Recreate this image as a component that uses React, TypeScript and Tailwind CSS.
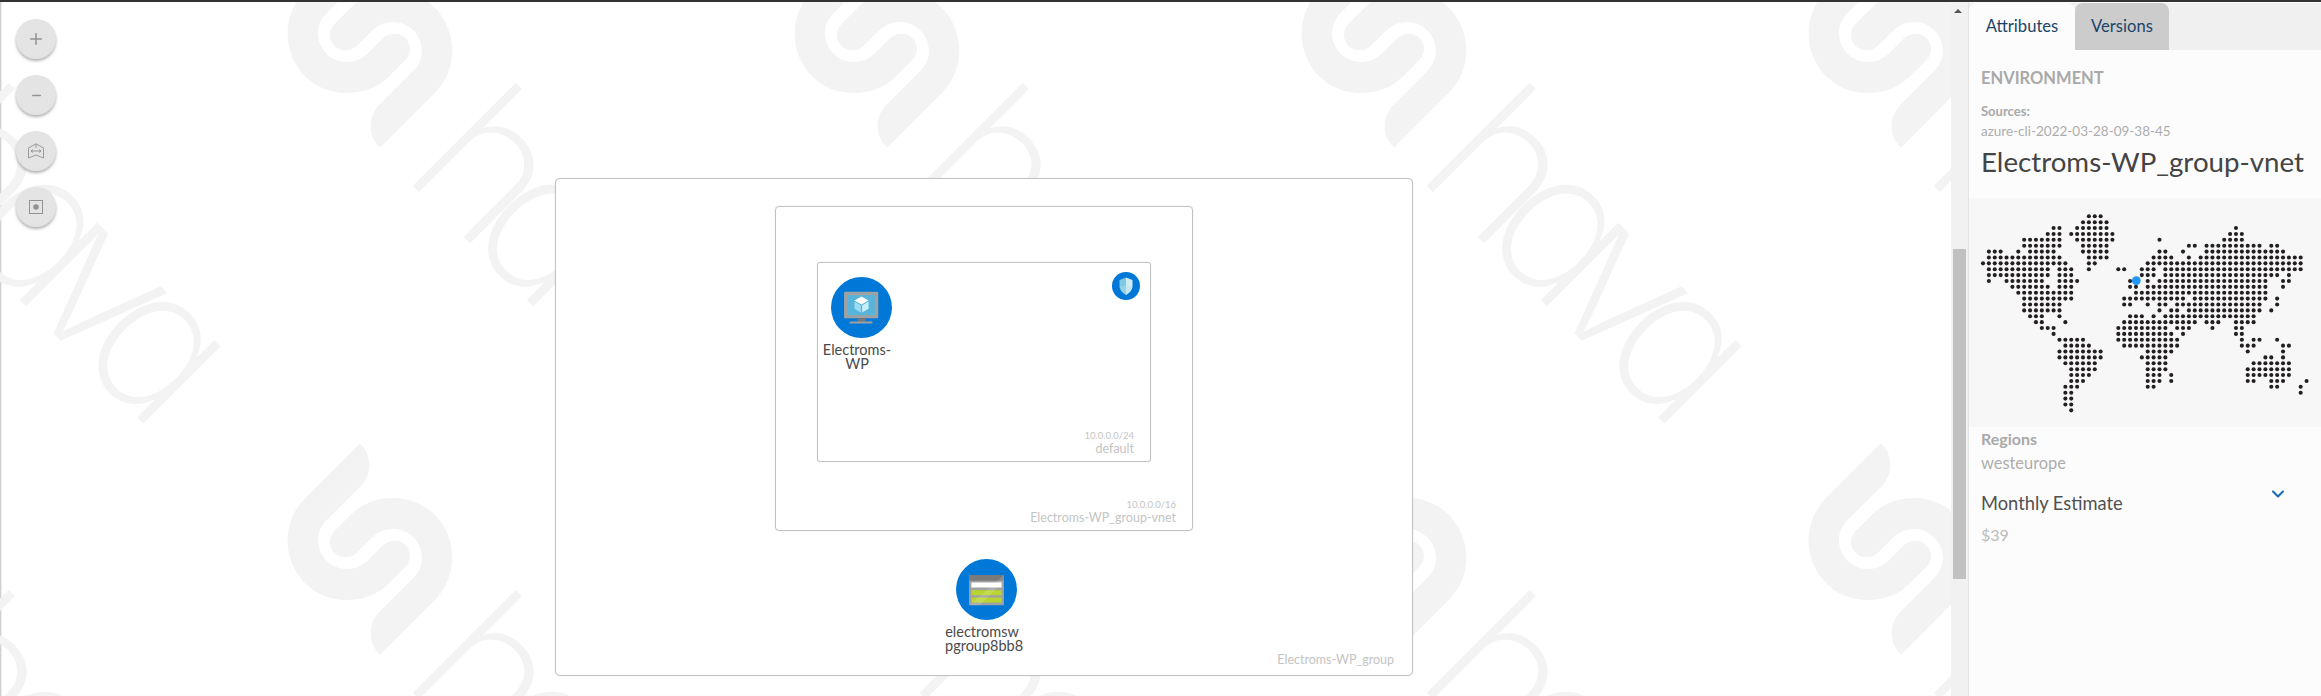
import { ChevronDown, Minus, Plus } from 'lucide-react'

// [row, fromCol, toCol] runs of the dotted world map
const mapRuns: number[][] = [
  [0, 18, 20], [1, 17, 21], [2, 12, 13], [2, 16, 21], [2, 43, 43],
  [3, 11, 13], [3, 15, 22], [3, 42, 44],
  [4, 7, 13], [4, 16, 22], [4, 30, 30], [4, 41, 44],
  [5, 7, 13], [5, 17, 21], [5, 35, 36], [5, 38, 47], [5, 49, 50],
  [6, 1, 3], [6, 6, 6], [6, 8, 12], [6, 17, 21], [6, 30, 31], [6, 34, 34], [6, 38, 51],
  [7, 1, 13], [7, 18, 21], [7, 29, 32], [7, 35, 35], [7, 37, 54],
  [8, 0, 14], [8, 18, 19], [8, 28, 54],
  [9, 1, 11], [9, 13, 15], [9, 18, 18], [9, 23, 24], [9, 27, 29], [9, 31, 54],
  [10, 1, 11], [10, 13, 15], [10, 27, 29], [10, 31, 50], [10, 52, 52],
  [11, 1, 1], [11, 4, 10], [11, 13, 16], [11, 25, 25], [11, 28, 28], [11, 30, 48], [11, 51, 52],
  [12, 5, 11], [12, 13, 15], [12, 25, 26], [12, 28, 48], [12, 51, 51],
  [13, 6, 15], [13, 26, 48],
  [14, 7, 15], [14, 24, 34], [14, 36, 48], [14, 50, 50],
  [15, 7, 13], [15, 24, 25], [15, 28, 28], [15, 30, 31], [15, 33, 47], [15, 50, 50],
  [16, 7, 13], [16, 30, 30], [16, 32, 33], [16, 35, 47], [16, 49, 49],
  [17, 8, 10], [17, 13, 13], [17, 25, 27], [17, 29, 29], [17, 31, 46],
  [18, 9, 10], [18, 14, 14], [18, 24, 36], [18, 38, 40], [18, 43, 46],
  [19, 10, 12], [19, 23, 31], [19, 33, 35], [19, 39, 39], [19, 43, 44],
  [20, 12, 12], [20, 23, 32], [20, 34, 34], [20, 43, 44],
  [21, 13, 17], [21, 23, 33], [21, 44, 44], [21, 46, 47], [21, 50, 50],
  [22, 14, 18], [22, 24, 33], [22, 44, 46], [22, 51, 52],
  [23, 13, 20], [23, 28, 32], [23, 45, 45], [23, 51, 51],
  [24, 13, 20], [24, 27, 31], [24, 48, 49], [24, 51, 51],
  [25, 14, 19], [25, 28, 31], [25, 46, 52],
  [26, 15, 19], [26, 28, 31], [26, 45, 52],
  [27, 15, 18], [27, 28, 30], [27, 32, 32], [27, 45, 52],
  [28, 15, 17], [28, 28, 30], [28, 32, 32], [28, 45, 46], [28, 49, 51], [28, 55, 55],
  [29, 14, 16], [29, 28, 29], [29, 49, 50], [29, 54, 54],
  [30, 14, 15], [30, 54, 54], [31, 14, 15], [32, 14, 15], [33, 15, 15],
]

const mapDots = mapRuns.flatMap(([row, from, to]) =>
  Array.from({ length: to - from + 1 }, (_, i) => ({ x: 1983 + (from + i) * 5.883, y: 217.3 + row * 5.88 }))
)

const logoPiece =
  'M1080 130C1100 150 1108 172 1108 195C1108 220 1098 240 1085 255L980 360C965 375 954 397 954 420C954 468 993 507 1040 507C1065 507 1088 497 1105 480L1150 435C1158 427 1170 422 1185 422C1210 422 1230 443 1230 468C1230 480 1225 492 1217 500L1165 552C1130 585 1090 600 1040 600C940 600 863 520 863 422C863 375 880 332 912 298Z'

function Watermark() {
  const tiles = [-507, 0].flatMap((dy) => [-507, 0, 507, 1014, 1521].map((dx) => ({ dx, dy })))
  return (
    <svg aria-hidden="true" className="absolute top-0 left-0" width={1951} height={694} viewBox="0 2 1951 694">
      {tiles.map(({ dx, dy }) => (
        <g key={`${dx}-${dy}`} transform={`translate(${dx} ${dy})`} fill="#f4f3f4">
          <g transform="translate(0 400) scale(0.3333)">
            <path d={logoPiece} />
            <path d={logoPiece} transform="rotate(180 1110 447)" />
          </g>
          <text
            transform="translate(400 680) rotate(45)"
            fontSize={200}
            textLength={372}
            className="font-['Inter',sans-serif] font-extralight [font-feature-settings:'cv11']"
          >
            hava
          </text>
        </g>
      ))}
    </svg>
  )
}

function ZoomButton({ children }: { children: React.ReactNode }) {
  return (
    <button className="flex h-10 w-10 items-center justify-center rounded-full bg-[#e4e4e4] text-[#929292] shadow-[0_2px_3px_rgba(0,0,0,0.3)]">
      {children}
    </button>
  )
}

function VmIcon() {
  return (
    <svg viewBox="94 49 182 182" className="h-[61px] w-[61px]">
      <circle cx="185" cy="140" r="91" fill="#0078d7" />
      <rect x="133" y="93" width="102" height="79" rx="3" fill="#a0a1a2" />
      <rect x="143" y="103" width="82" height="60" fill="#59b4d9" />
      <rect x="172" y="172" width="26" height="10" fill="#767676" />
      <rect x="150" y="182" width="68" height="6" rx="2" fill="#a0a1a2" />
      <path d="M185 107L206 119L185 131L164 119Z" fill="#ffffff" />
      <path d="M164 122L183 133V155L164 144Z" fill="#9cdcf5" />
      <path d="M206 122L187 133V155L206 144Z" fill="#c8eefa" />
    </svg>
  )
}

function StorageIcon() {
  return (
    <svg viewBox="79 27 182 182" className="h-[61px] w-[61px]">
      <circle cx="170" cy="118" r="91" fill="#0078d7" />
      <rect x="118" y="75" width="104" height="90" rx="3" fill="#a0a1a2" />
      <path d="M121 75H219Q222 75 222 78V92H118V78Q118 75 121 75Z" fill="#7a7a7a" />
      <rect x="125" y="97" width="90" height="15" fill="#ffffff" />
      <rect x="125" y="120" width="90" height="15" fill="#b8d432" />
      <rect x="125" y="142" width="90" height="15" fill="#b8d432" />
      <path d="M222 75V92L150 165H118Z" fill="#ffffff" opacity="0.14" />
    </svg>
  )
}

function ShieldIcon() {
  return (
    <svg viewBox="0 0 28 28" className="h-7 w-7">
      <circle cx="14" cy="14" r="14" fill="#0078d7" />
      <path d="M14 5.5L7.5 8V14C7.5 18 10.5 21 14 23Z" fill="#7fc8e0" />
      <path d="M14 5.5L20.5 8V14C20.5 18 17.5 21 14 23Z" fill="#c6e7f2" />
      <path d="M14 14H7.7C8.2 18 10.8 21 14 23ZM14 14H20.3V8.2L14 5.5Z" fill="#ffffff" opacity="0.18" />
    </svg>
  )
}

function Node({ className, icon, lines }: { className: string; icon: React.ReactNode; lines: string[] }) {
  return (
    <div className={`absolute flex flex-col ${className}`}>
      {icon}
      <div className="mt-[5px] -ml-[11px] w-[74px] text-center text-[14.5px] leading-[14px] text-[#4a4a4a]">
        {lines.map((line) => (
          <div key={line}>{line}</div>
        ))}
      </div>
    </div>
  )
}

function Diagram() {
  return (
    <div className="absolute top-[176px] left-[555px] flex h-[498px] w-[858px] flex-col items-end justify-end rounded-[5px] border border-[#c2c2c2] bg-white pr-[18px] pb-[7px] shadow-[0_0_1px_rgba(0,0,0,0.2)]">
      <div className="text-[12.5px] leading-4 text-[#c4c4c4]">Electroms-WP_group</div>

      <div className="absolute top-[27px] left-[219px] flex h-[325px] w-[418px] flex-col items-end justify-end rounded-[4px] border border-[#c2c2c2] pr-4 pb-[5px] shadow-[0_0_1px_rgba(0,0,0,0.2)]">
        <div className="text-[9.5px] leading-3 text-[#c4c4c4]">10.0.0.0/16</div>
        <div className="text-[12.5px] leading-[14px] text-[#c4c4c4]">Electroms-WP_group-vnet</div>

        <div className="absolute top-[55px] left-[41px] flex h-[200px] w-[334px] flex-col items-end justify-end rounded-[3px] border border-[#c2c2c2] pr-4 pb-[5px] shadow-[0_0_1px_rgba(0,0,0,0.2)]">
          <div className="text-[9.5px] leading-3 text-[#c4c4c4]">10.0.0.0/24</div>
          <div className="text-[12.5px] leading-[14px] text-[#c4c4c4]">default</div>
          <Node className="top-[14px] left-[13px]" icon={<VmIcon />} lines={['Electroms-', 'WP']} />
          <div className="absolute top-[9px] right-[10px]">
            <ShieldIcon />
          </div>
        </div>
      </div>

      <Node className="top-[380px] left-[400px]" icon={<StorageIcon />} lines={['electromsw', 'pgroup8bb8']} />
    </div>
  )
}

function Canvas() {
  return (
    <div className="relative flex-1 overflow-hidden bg-white shadow-[inset_2px_0_2px_-1px_rgba(0,0,0,0.25)]">
      <Watermark />
      <div className="absolute top-[17px] left-4 flex flex-col gap-4">
        <ZoomButton>
          <Plus size={18} strokeWidth={2} />
        </ZoomButton>
        <ZoomButton>
          <Minus size={13} strokeWidth={2.5} />
        </ZoomButton>
        <ZoomButton>
          <svg viewBox="0 0 16 16" className="h-4 w-4" fill="none" stroke="currentColor" strokeWidth="0.9">
            <path d="M0.5 5L8 0.8L15.5 5V15L8 12L0.5 15Z" />
            <path d="M3 8H13M3 8L5 6.5M3 8L5 9.5M13 8L11 6.5M13 8L11 9.5M8 1V5" />
          </svg>
        </ZoomButton>
        <ZoomButton>
          <svg viewBox="0 0 14 14" className="h-3.5 w-3.5" fill="none" stroke="currentColor" strokeWidth="1">
            <rect x="0.5" y="0.5" width="13" height="13" />
            <circle cx="7" cy="7" r="2.8" fill="currentColor" stroke="none" />
          </svg>
        </ZoomButton>
      </div>
      <Diagram />
    </div>
  )
}

function Scrollbar() {
  return (
    <div className="relative w-[17px] bg-[#f1f1f1]">
      <div className="absolute top-[7px] left-[3px] h-0 w-0 border-x-[4px] border-b-[4px] border-x-transparent border-b-[#555]" />
      <div className="absolute top-[247px] left-[2px] h-[330px] w-[13px] bg-[#c1c1c1]" />
    </div>
  )
}

function Sidebar() {
  return (
    <div className="w-[353px] border-l border-[#e4e4e4] bg-[#fcfcfc] pt-px">
      <div className="flex h-[47px] bg-[#f0f0f0]">
        <div className="flex w-[106px] items-center justify-center rounded-t-[8px] bg-[#fcfcfc] text-[16.6px] text-[#1d4468]">
          Attributes
        </div>
        <div className="flex w-[94px] items-center justify-center rounded-t-[8px] bg-[#cccccc] text-[16.6px] text-[#1d4468]">
          Versions
        </div>
      </div>

      <div className="px-3">
        <div className="mt-[18px] text-[16.5px] leading-[20px] font-bold text-[#a9a9a9]">ENVIRONMENT</div>
        <div className="mt-[15px] text-[13px] leading-[16px] font-bold text-[#a9a9a9]">Sources:</div>
        <div className="mt-[4px] text-[13.5px] leading-[16px] text-[#adadad]">azure-cli-2022-03-28-09-38-45</div>
        <div className="mt-[5px] text-[27.7px] leading-[36px] whitespace-nowrap text-[#444444]">Electroms-WP_group-vnet</div>
      </div>

      <div className="mt-[18px] h-[229px] bg-[#f7f7f7]">
        <svg viewBox="1969 199 352 229" className="h-[229px] w-[352px]">
          {mapDots.map((dot) => (
            <circle key={`${dot.x}-${dot.y}`} cx={dot.x} cy={dot.y} r="2.05" fill="#231f20" />
          ))}
          <circle cx="2136.3" cy="281.7" r="4.4" fill="#2196f3" />
        </svg>
      </div>

      <div className="px-3">
        <div className="mt-[2px] text-[16px] leading-[20px] font-bold text-[#a9a9a9]">Regions</div>
        <div className="mt-[4px] text-[16.4px] leading-[20px] text-[#adadad]">westeurope</div>
        <div className="mt-[10px] flex items-start justify-between pr-[21px]">
          <div className="mt-[8px] text-[18.3px] leading-[24px] text-[#505050]">Monthly Estimate</div>
          <ChevronDown size={20} strokeWidth={2.5} className="mt-[1px] text-[#1b6ab3]" />
        </div>
        <div className="mt-[10px] text-base leading-[20px] text-[#bcbcbc]">$39</div>
      </div>
    </div>
  )
}

export default function App() {
  return (
    <div className="h-[696px] w-[2321px] overflow-hidden bg-white font-['Lato',sans-serif]">
      <div className="h-0.5 bg-[#333333]" />
      <div className="flex h-[694px]">
        <Canvas />
        <Scrollbar />
        <Sidebar />
      </div>
    </div>
  )
}
